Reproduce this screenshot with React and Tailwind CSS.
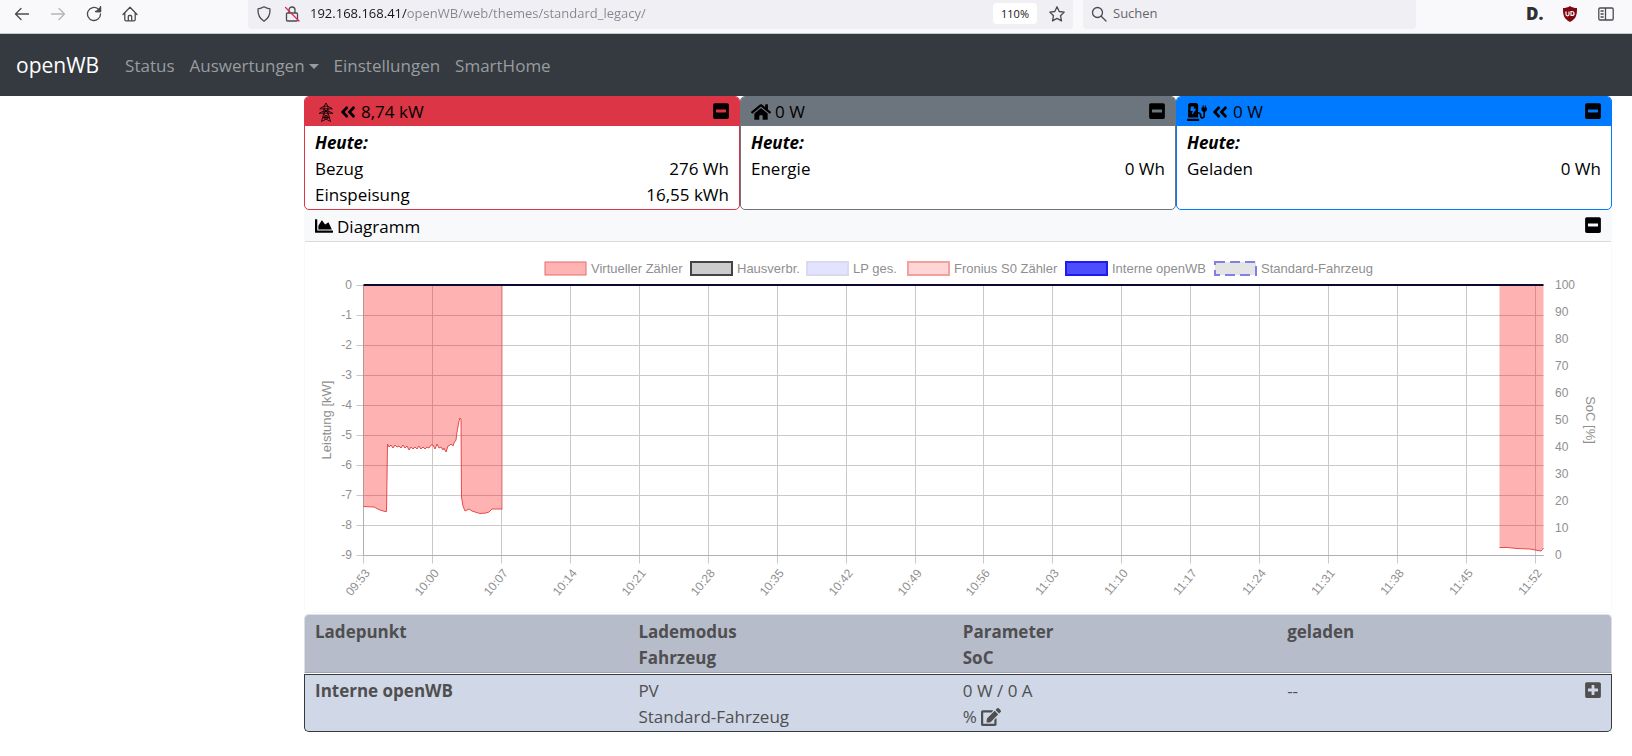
import React, { useState } from 'react';
import {
  FaAngleDoubleLeft,
  FaChargingStation,
  FaChartArea,
  FaEdit,
  FaHome,
  FaMinusSquare,
  FaPlusSquare,
} from 'react-icons/fa';

// Small line icon used in the browser bar
const BarIcon = ({ children, className = 'text-[#4a4a52]' }) => (
  <svg
    viewBox="0 0 16 16"
    className={`size-4 shrink-0 ${className}`}
    fill="none"
    stroke="currentColor"
    strokeWidth="1.3"
    strokeLinecap="round"
    strokeLinejoin="round"
    aria-hidden="true"
  >
    {children}
  </svg>
);

const PylonIcon = () => (
  <svg
    viewBox="0 0 16 20"
    className="h-5 w-4 shrink-0"
    fill="none"
    stroke="currentColor"
    strokeWidth="0.8"
    aria-hidden="true"
  >
    <path d="M6 4.500 8 1l2 3.500M6 4.500v6L3.500 19.500M10 4.500v6l2.500 9" />
    <path d="M2 7.500v-1l4-2.300h4l4 2.300v1M2 6.800h12" />
    <path d="M1.500 12v-1l4.500-2h4l4.500 2v1M1.500 11.200h13" />
    <path d="m6 7 4 4M10 7l-4 4M5.500 12.500l5.500 3M10.500 12.500l-5.500 3M5 15.500h6M5 15.500l7.500 4M11 15.500l-7.500 4" />
  </svg>
);

const BrowserBar = () => {
  const [url, setUrl] = useState('192.168.168.41/openWB/web/themes/standard_legacy/');
  const [search, setSearch] = useState('');

  return (
    <div className="flex h-[34px] items-start border-b border-[#c3cbc8] bg-[#f9f9fb] pr-[18px] pl-3.5">
      <div className="flex h-7 w-[234px] shrink-0 items-center gap-5">
        <button type="button" aria-label="Zurück">
          <BarIcon><path d="M14.500 8h-13M7 2.500 1.500 8 7 13.500" /></BarIcon>
        </button>
        <button type="button" aria-label="Vor">
          <BarIcon className="text-[#b5b5bb]"><path d="M1.500 8h13M9 2.500 14.500 8 9 13.500" /></BarIcon>
        </button>
        <button type="button" aria-label="Neu laden">
          <BarIcon>
            <path d="M14.500 8a6.500 6.500 0 1 1-2.300-5M9.500 5.500h5v-5" />
            <path d="M10.500 5.500h4v-4z" fill="currentColor" />
          </BarIcon>
        </button>
        <button type="button" aria-label="Startseite">
          <BarIcon>
            <path d="M1 8.500 8 1.200l7 7.300M2.800 7v6.500c0 .8.500 1.300 1.300 1.300h7.800c.8 0 1.300-.5 1.300-1.300V7M6.300 14.500v-4c0-.7.400-1 1-1h1.400c.6 0 1 .3 1 1v4" />
          </BarIcon>
        </button>
      </div>

      <div className="flex h-[29px] min-w-0 flex-1 items-center rounded-b bg-[#f0f0f4] pr-2 pb-0.5 pl-2">
        <BarIcon>
          <path d="M8 .8c2 1.300 4 1.900 6 2 .3 5.500-1 9.500-6 12.400C3 12.300 1.700 8.300 2 2.800c2-.1 4-.7 6-2z" />
        </BarIcon>
        <span className="w-3" />
        <BarIcon>
          <path d="M3.500 7h9c.6 0 1 .4 1 1v6c0 .6-.4 1-1 1h-9c-.6 0-1-.4-1-1V8c0-.6.4-1 1-1zM5 6V4c0-4 6-4 6 0v3" />
          <path d="m1.500 1.500 13.500 13.500" stroke="#e22850" />
        </BarIcon>
        <input
          type="text"
          aria-label="Adresse"
          value={url}
          onChange={(e) => setUrl(e.target.value)}
          className="ml-2.5 min-w-0 flex-1 bg-[linear-gradient(90deg,#15141a_97px,#85858e_97px)] bg-clip-text text-[13px] text-transparent outline-none"
        />
        <span className="mr-3 rounded bg-white px-2 text-[11px] leading-[21px] text-[#15141a]">110%</span>
        <button type="button" aria-label="Lesezeichen">
          <BarIcon>
            <path d="m8 .8 2.200 4.700 5 .6-3.700 3.600 1 5.200L8 12.400l-4.500 2.500 1-5.200L.8 6.100l5-.6z" />
          </BarIcon>
        </button>
      </div>

      <div className="ml-2.5 flex h-[29px] w-[333px] shrink-0 items-center gap-1.5 rounded-b bg-[#f0f0f4] pb-0.5 pl-2">
        <BarIcon><path d="M11.500 6.500a5 5 0 1 1-10 0 5 5 0 0 1 10 0zM10.200 10.200l4.800 4.800" /></BarIcon>
        <input
          type="text"
          aria-label="Suchen"
          placeholder="Suchen"
          value={search}
          onChange={(e) => setSearch(e.target.value)}
          className="min-w-0 flex-1 text-[13px] text-[#15141a] outline-none placeholder:text-[#65656d]"
        />
      </div>

      <div className="ml-[110px] flex h-7 shrink-0 items-center gap-5">
        <button type="button" className="w-4 text-[17px] leading-5 font-extrabold text-[#303033]">D.</button>
        <button type="button" aria-label="uBlock">
          <svg viewBox="0 0 16 16" className="size-4" aria-hidden="true">
            <path d="M8 0c2 1.400 4.500 2 7 2 0 7-.5 10.500-7 14C1.500 12.500 1 9 1 2c2.500 0 5-.6 7-2z" fill="#800610" />
            <path d="M4 5.500v2.800c0 2 3 2 3 0V5.500M9 5.500v4h.8c3 0 3-4 0-4z" fill="none" stroke="#fff" strokeWidth="1.200" />
          </svg>
        </button>
        <button type="button" aria-label="Seitenleiste">
          <BarIcon>
            <path d="M2 2h12c.7 0 1.200.5 1.200 1.200v9.600c0 .7-.5 1.200-1.200 1.200H2c-.7 0-1.200-.5-1.200-1.200V3.200C.8 2.500 1.300 2 2 2zM7.500 2v12M3 5h2.200M3 8h2.200M3 11h2.200" />
          </BarIcon>
        </button>
      </div>
    </div>
  );
};

const Navbar = () => (
  <nav className="flex h-[62px] items-center gap-[15px] bg-[#343a40] px-4 pt-0.5 text-[17px] text-[#999c9f]">
    <a href="#" className="mr-[11px] text-[21px] text-white">openWB</a>
    <a href="#status">Status</a>
    <button type="button" className="flex items-center gap-1">
      Auswertungen
      <span className="border-x-5 border-t-5 border-x-transparent border-t-[#999c9f]" />
    </button>
    <a href="#einstellungen">Einstellungen</a>
    <a href="#smarthome">SmartHome</a>
  </nav>
);

const cards = [
  {
    border: 'border-[#dc3545]',
    header: 'bg-[#dc3545]',
    icon: (
      <>
        <span className="ml-[3px]"><PylonIcon /></span>
        <FaAngleDoubleLeft className="ml-[5px] text-[18px]" />
      </>
    ),
    value: '8,74 kW',
    rows: [['Bezug', '276 Wh'], ['Einspeisung', '16,55 kWh']],
  },
  {
    border: 'border-[#6c757d]',
    header: 'bg-[#6c757d]',
    icon: <FaHome className="text-[20px]" />,
    value: '0 W',
    rows: [['Energie', '0 Wh']],
  },
  {
    border: 'border-[#007bff]',
    header: 'bg-[#007bff]',
    icon: (
      <>
        <FaChargingStation className="text-[20px]" />
        <FaAngleDoubleLeft className="ml-1 text-[18px]" />
      </>
    ),
    value: '0 W',
    rows: [['Geladen', '0 Wh']],
  },
];

const Card = ({ border, header, icon, value, rows }) => (
  <section className={`overflow-hidden rounded-[5px] border bg-white ${border}`}>
    <div className={`flex h-[29px] items-center pr-[9px] pl-2.5 ${header}`}>
      {icon}
      <span className="ml-1">{value}</span>
      <button type="button" aria-label="Einklappen" className="ml-auto pb-0.5 text-[18px]">
        <FaMinusSquare />
      </button>
    </div>
    <div className="px-2.5 pt-1 pb-px">
      <h2 className="font-bold italic">Heute:</h2>
      {rows.map(([label, amount]) => (
        <div key={label} className="flex justify-between">
          <span>{label}</span>
          <span>{amount}</span>
        </div>
      ))}
    </div>
  </section>
);

const legend = [
  { x: 240, label: 'Virtueller Zähler', fill: '#ffb3b3', stroke: '#e56a6a', width: 1 },
  { x: 386, label: 'Hausverbr.', fill: '#cccccc', stroke: '#444444', width: 2 },
  { x: 502, label: 'LP ges.', fill: '#e3e3ff', stroke: '#d9d9ef', width: 2 },
  { x: 603, label: 'Fronius S0 Zähler', fill: '#ffd6d6', stroke: '#f5a0a0', width: 2 },
  { x: 761, label: 'Interne openWB', fill: '#4d4dff', stroke: '#1c1cf0', width: 2 },
  { x: 910, label: 'Standard-Fahrzeug', fill: '#e4e4e4', stroke: '#8080e6', width: 2, dash: '10 5' },
];

const times = [
  '09:53', '10:00', '10:07', '10:14', '10:21', '10:28', '10:35', '10:42', '10:49',
  '10:56', '11:03', '11:10', '11:17', '11:24', '11:31', '11:38', '11:45', '11:52',
];

// Plot area inside the svg
const LEFT = 58.5;
const RIGHT = 1238.5;
const TOP = 43.5;
const STEP_X = 69;
const STEP_Y = 30;
const BOTTOM = TOP + 9 * STEP_Y;

const gridX = (i) => Math.round(i * (STEP_X - 0.06)) + LEFT;

const morning =
  '58.500,264.500 69,265 75,268 80,269.500 81.500,269.500 82.500,202 84,205 86,203 88,206 90,203 92,205 94,204 96,206 98,203 100,206 ' +
  '102,204 104,208 106,205 108,207 110,205 112,207 114,204 116,207 118,205 120,207 122,205 124,206 126,203 128,203 130,207 132,202 134,206 136,205 138,208 139,206 141,210 143,204 ' +
  '145,203 146,202 148,204 149,201 151,198 152,190 154,179 155,176 156,177 156.500,255 158,264 160,269 162,268 164,267 167,269 170,270 175,271.500 181,271 184,270 187,267 197.500,267';
const noon = '1194.500,305.500 1202,305.500 1212,306.500 1225,307 1230,308 1236,309 1238.500,306';

const Chart = () => (
  <svg
    viewBox="0 0 1306 370"
    className="block w-full font-['Liberation_Sans',Arial,sans-serif]"
    role="img"
    aria-label="Leistungsdiagramm"
    fill="#8f8f8f"
    fontSize="12"
  >
    {legend.map(({ x, label, fill, stroke, width, dash }) => (
      <g key={label} fontSize="13">
        <rect x={x} y="20" width="41" height="13" fill={fill} stroke={stroke} strokeWidth={width} strokeDasharray={dash} />
        <text x={x + 46} y="31">{label}</text>
      </g>
    ))}

    {/* Grid */}
    <g stroke="#c9c9c9">
      {times.map((t, i) => (
        <line key={t} x1={gridX(i)} x2={gridX(i)} y1={TOP} y2={BOTTOM + 8} />
      ))}
      {Array.from({ length: 10 }, (_, i) => (
        <line key={i} x1={LEFT - 7} x2={RIGHT} y1={TOP + i * STEP_Y} y2={TOP + i * STEP_Y} />
      ))}
      <path d={`M${LEFT} ${TOP}V${BOTTOM}H${RIGHT}`} fill="none" stroke="#b0b0b0" />
    </g>

    {/* Grid power */}
    {[morning, noon].map((points) => {
      const coords = points.split(' ');
      const start = coords[0].split(',')[0];
      const end = coords[coords.length - 1].split(',')[0];
      return (
        <g key={start}>
          <polygon points={`${start},${TOP} ${points} ${end},${TOP}`} fill="#ff0000" fillOpacity="0.3" />
          <polyline points={points} fill="none" stroke="#e84a4a" />
        </g>
      );
    })}
    <line x1="197.5" x2="197.5" y1={TOP} y2="267" stroke="#e84a4a" strokeOpacity="0.2" />
    <line x1={LEFT} x2={RIGHT} y1={TOP - 0.5} y2={TOP - 0.5} stroke="#0d0830" strokeWidth="2" />

    {/* Axis labels */}
    {Array.from({ length: 10 }, (_, i) => (
      <text key={i} x="47" y={TOP + i * STEP_Y + 3.5} textAnchor="end">{i === 0 ? '0' : `-${i}`}</text>
    ))}
    {Array.from({ length: 11 }, (_, i) => (
      <text key={i} x="1250" y={TOP + i * 27 + 3.5}>{100 - i * 10}</text>
    ))}
    {times.map((t, i) => (
      <text key={t} textAnchor="end" transform={`translate(${gridX(i) + 7} ${BOTTOM + 18}) rotate(-50)`}>{t}</text>
    ))}
    <text fontSize="13" textAnchor="middle" transform="translate(26 178) rotate(-90)">Leistung [kW]</text>
    <text fontSize="13" textAnchor="middle" transform="translate(1281 178) rotate(90)">SoC [%]</text>
  </svg>
);

const ChargePoints = () => (
  <table className="w-full table-fixed border-separate border-spacing-x-0 border-spacing-y-px text-left align-top text-[#4f4f4f]">
    <colgroup>
      <col className="w-[24.8%]" />
      <col className="w-[24.8%]" />
      <col className="w-[24.8%]" />
      <col />
    </colgroup>
    <thead>
      <tr className="*:border-t *:border-b *:border-t-[#dcdfe3] *:border-b-[#9fa3b0] *:bg-[#b7bccb] *:pt-1 *:pb-px *:pl-2.5 *:align-top">
        <th className="rounded-tl-[5px] border-l border-l-[#dcdfe3]">Ladepunkt</th>
        <th>Lademodus<br />Fahrzeug</th>
        <th>Parameter<br />SoC</th>
        <th className="rounded-tr-[5px] border-r border-r-[#dcdfe3]">geladen</th>
      </tr>
    </thead>
    <tbody>
      <tr className="*:border-y *:border-[#343a40] *:bg-[#d0d7e7] *:pt-[3px] *:pb-px *:pl-2.5 *:align-top">
        <th className="rounded-bl-[5px] border-l">Interne openWB</th>
        <td>PV<br />Standard-Fahrzeug</td>
        <td>
          0 W / 0 A
          <div className="flex items-center gap-1">
            %
            <button type="button" aria-label="SoC bearbeiten" className="text-[20px]"><FaEdit /></button>
          </div>
        </td>
        <td className="rounded-br-[5px] border-r">
          <div className="flex items-center justify-between pr-[9px]">
            --
            <button type="button" aria-label="Ausklappen" className="pb-0.5 text-[18px]"><FaPlusSquare /></button>
          </div>
        </td>
      </tr>
    </tbody>
  </table>
);

const App = () => (
  <div className="min-h-screen bg-white font-['Open_Sans','Noto_Sans',sans-serif]">
    <BrowserBar />
    <Navbar />
    <main className="mr-5 ml-[304px] text-[17px] leading-[26px] text-black">
      <div className="grid grid-cols-3">
        {cards.map((card) => (
          <Card key={card.header} {...card} />
        ))}
      </div>
      <section className="rounded-b-[5px] border-x border-b border-[#f8f9fa]">
        <div className="flex h-8 items-center border-b border-[#d9dadb] bg-[#f8f9fa] pr-[9px] pl-2.5">
          <FaChartArea className="text-[18px]" />
          <h2 className="ml-1 pt-0.5">Diagramm</h2>
          <button type="button" aria-label="Einklappen" className="ml-auto pb-0.5 text-[18px]">
            <FaMinusSquare />
          </button>
        </div>
        <Chart />
      </section>
      <ChargePoints />
    </main>
  </div>
);

export default App;
